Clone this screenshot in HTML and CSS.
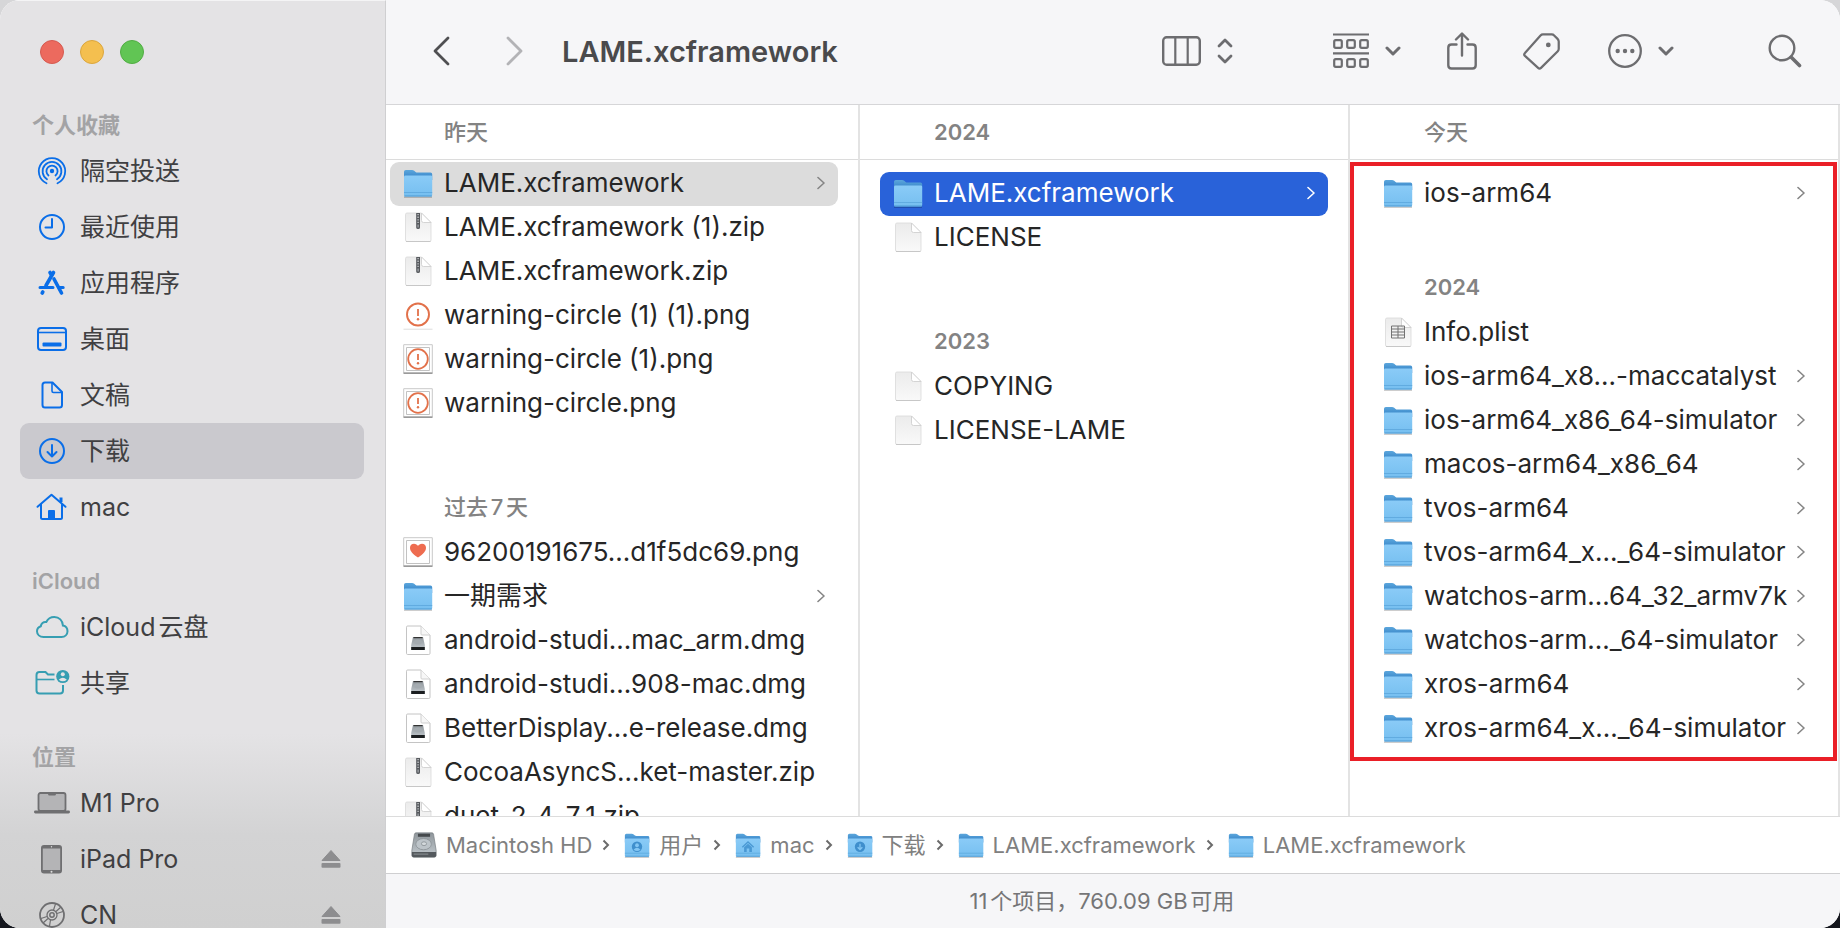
FILE: index.html
```html
<!DOCTYPE html>
<html lang="zh-CN">

<head>
    <meta charset="UTF-8">
    <meta name="viewport" content="width=device-width, initial-scale=1.0">
    <title>LAME.xcframework</title>
    <link rel="stylesheet" href="styles.css">
</head>

<body>
    <!-- icon sprite -->
    <svg class="sprite" width="0" height="0" aria-hidden="true">
        <defs>
            <linearGradient id="folderFront" x1="0" y1="0" x2="0" y2="1">
                <stop offset="0" stop-color="#8acbf7" />
                <stop offset="1" stop-color="#76bff0" />
            </linearGradient>
            <linearGradient id="folderBack" x1="0" y1="0" x2="0" y2="1">
                <stop offset="0" stop-color="#5ba6dc" />
                <stop offset="1" stop-color="#2f7dc4" />
            </linearGradient>
            <linearGradient id="paper" x1="0" y1="0" x2="0" y2="1">
                <stop offset="0" stop-color="#ebebeb" />
                <stop offset="1" stop-color="#f9f9f9" />
            </linearGradient>
            <linearGradient id="metal" x1="0" y1="0" x2="0" y2="1">
                <stop offset="0" stop-color="#8f969b" />
                <stop offset="1" stop-color="#c3cacf" />
            </linearGradient>
        </defs>

        <symbol id="folder" viewBox="0 0 30 30">
            <path d="M1 29.2h28" stroke="#000" stroke-opacity=".22" stroke-width="1.4" />
            <path d="M1 3.8Q1 2 2.8 2H9q1.300 0 2.200.8l1.400 1.200q.6.5 1.800.5H27.500q1.700 0 1.700 1.700V12H1z" fill="url(#folderBack)" />
            <path d="M1 8.800Q1 7.500 2.300 7.500H27.900q1.300 0 1.300 1.300V27q0 1.500-1.500 1.500H2.500Q1 28.500 1 27z" fill="url(#folderFront)" />
            <path d="M1 24.500h28.200" stroke="#5aa6dc" stroke-width=".8" />
            <path d="M1.400 28h27.400" stroke="#4e9ad2" stroke-width="1" />
        </symbol>

        <symbol id="page" viewBox="0 0 30 30">
            <path d="M2.500 2.500Q2.500 1 4 1H18.500L28 10.500V28q0 1.500-1.500 1.500H4q-1.500 0-1.500-1.500z" fill="url(#paper)" stroke="#d9d9d9" stroke-width=".8" />
            <path d="M3 29.500h24.500" stroke="#c4c4c4" stroke-width=".9" />
            <path d="M18.500 1V8.500q0 2 2 2H28z" fill="#fff" stroke="#cfcfcf" stroke-width=".9" />
        </symbol>

        <symbol id="zip" viewBox="0 0 30 30">
            <use href="#page" />
            <path d="M13.200 1h3.800v14.500q0 1.500-1.900 1.500t-1.900-1.500z" fill="#55585c" />
            <path d="M15.100 2v9" stroke="#c4c6c9" stroke-width="1.400" stroke-dasharray="1.300 1.300" />
            <path d="M15.100 12.500v3" stroke="#a9acb0" stroke-width="1.200" />
        </symbol>

        <symbol id="plist" viewBox="0 0 30 30">
            <use href="#page" />
            <path d="M8.500 9h13v12h-13zM8.500 12h13M8.500 15h13M8.500 18h13M15 9v12" fill="none" stroke="#737373" stroke-width="1" />
        </symbol>

        <symbol id="dmg" viewBox="0 0 30 30">
            <path d="M3.500 2.200Q3.500 1 4.700 1H18l9 9V28.300q0 1.200-1.200 1.200H4.700q-1.200 0-1.200-1.200z" fill="#fff" stroke="#c4c4c4" stroke-width="1" />
            <path d="M18 1v8q0 1 1 1h8" fill="#f7f7f7" stroke="#cfcfcf" stroke-width="1" />
            <path d="M10 12h10l1.800 8v5H8.200v-5z" fill="url(#metal)" />
            <path d="M10.500 12h9v1.200h-9z" fill="#333" />
            <ellipse cx="15" cy="17" rx="4" ry="2.500" fill="#a4abb0" />
            <path d="M8.200 22h13.600v3H8.200z" fill="#1b1e20" />
        </symbol>

        <symbol id="warning" viewBox="0 0 30 30">
            <path d="M.5 29.200h29" stroke="#ddd" stroke-width="1" />
            <circle cx="15" cy="14.500" r="11" fill="#fff" stroke="#e2714a" stroke-width="1.900" />
            <path d="M15 9v7" stroke="#e2714a" stroke-width="1.800" />
            <circle cx="15" cy="19.300" r="1.200" fill="#e2714a" />
        </symbol>

        <symbol id="photo" viewBox="0 0 30 30">
            <path d="M.7 .7h28.600v28.200H.7z" fill="#fff" stroke="#c9c9c9" stroke-width="1" />
            <path d="M.5 29.200h29" stroke="#8c8c8c" stroke-width="1.300" />
            <path d="M3.500 3.500h23v23h-23z" fill="#fff" stroke="#c2c2c2" stroke-width="1" />
        </symbol>

        <symbol id="warningPhoto" viewBox="0 0 30 30">
            <use href="#photo" />
            <circle cx="15" cy="15" r="9.800" fill="none" stroke="#e2714a" stroke-width="1.800" />
            <path d="M15 10v6" stroke="#e2714a" stroke-width="1.800" />
            <circle cx="15" cy="19.300" r="1.200" fill="#e2714a" />
        </symbol>

        <symbol id="heartPhoto" viewBox="0 0 30 30">
            <use href="#photo" />
            <path d="M15 20.500C9.500 17 7 14 7 10.800 7 8.400 8.800 6.800 11 6.800c1.800 0 3.200.9 4 2.300.8-1.400 2.200-2.300 4-2.300 2.200 0 4 1.600 4 4 0 3.200-2.500 6.200-8 9.700z" fill="#ee6c50" />
        </symbol>

        <symbol id="disk" viewBox="0 0 30 30">
            <path d="M4 2.500Q4.300 1 5.800 1h18.400q1.500 0 1.800 1.500L29 21v6q0 2-2 2H3q-2 0-2-2v-6z" fill="url(#metal)" stroke="#777d81" stroke-width=".8" />
            <path d="M8 2h14v3.500H8z" fill="#45494c" />
            <ellipse cx="14.500" cy="14" rx="9" ry="6.500" fill="#bdc4c9" stroke="#8d9499" />
            <ellipse cx="15" cy="13.500" rx="3" ry="2.200" fill="#d4d9dc" stroke="#8d9499" />
            <path d="M1 23h28v4q0 2-2 2H3q-2 0-2-2z" fill="#54595d" />
            <path d="M3 25.500h17" stroke="#949a9f" stroke-width="1" />
        </symbol>

        <symbol id="folderUser" viewBox="0 0 30 30">
            <use href="#folder" />
            <circle cx="15" cy="17" r="6" fill="#3f8fcd" />
            <circle cx="15" cy="15.300" r="2.200" fill="#83c6f3" />
            <path d="M11 20.500q4-4.500 8 0-4 3-8 0z" fill="#83c6f3" />
        </symbol>

        <symbol id="folderHome" viewBox="0 0 30 30">
            <use href="#folder" />
            <path d="M8.500 17.500L15 11.500l6.500 6" fill="none" stroke="#4a99d4" stroke-width="1.600" />
            <path d="M10.500 17.500L15 13.500l4.500 4V23h-3v-4h-3v4h-3z" fill="#4a99d4" />
        </symbol>

        <symbol id="folderDown" viewBox="0 0 30 30">
            <use href="#folder" />
            <circle cx="15" cy="17" r="6" fill="#3f8fcd" />
            <path d="M15 13.500v6M12.300 17.500l2.700 2.700 2.700-2.700" fill="none" stroke="#83c6f3" stroke-width="1.500" />
        </symbol>

        <symbol id="chevron" viewBox="0 0 8 14">
            <path d="M1 1.500L7 7l-6 5.500" fill="none" stroke="currentColor" stroke-width="1.600" stroke-linecap="round" stroke-linejoin="round" />
        </symbol>

        <symbol id="caret" viewBox="0 0 16 10">
            <path d="M2 2l6 6 6-6" fill="none" stroke="currentColor" stroke-width="3" stroke-linecap="round" stroke-linejoin="round" />
        </symbol>

        <symbol id="eject" viewBox="0 0 20 20">
            <path d="M10 1.500L19 11.500H1z" stroke="currentColor" stroke-linejoin="round" fill="currentColor" />
            <rect x="0.500" y="14" width="19" height="4.800" rx="1" fill="currentColor" />
        </symbol>
    </svg>

    <div class="window">
        <nav class="sidebar">
            <div class="traffic-lights">
                <button class="light red" aria-label="关闭"></button>
                <button class="light yellow" aria-label="最小化"></button>
                <button class="light green" aria-label="缩放"></button>
            </div>

            <h2 class="sidebar-title">个人收藏</h2>
            <ul class="sidebar-list">
                <li class="sidebar-item"><a href="#">
                    <svg class="side-icon blue" viewBox="0 0 36 36">
                        <g fill="none" stroke="currentColor" stroke-width="1.800" stroke-linecap="round">
                            <path d="M12.500 30.300A13.200 13.200 0 1 1 23.500 30.300" />
                            <path d="M13 26.200A9.400 9.400 0 1 1 23 26.200" />
                            <path d="M14.500 22.500A5.600 5.600 0 1 1 21.500 22.500" />
                        </g>
                        <circle cx="18" cy="18" r="2.200" fill="currentColor" />
                    </svg>
                    <span>隔空投送</span></a></li>
                <li class="sidebar-item"><a href="#">
                    <svg class="side-icon blue" viewBox="0 0 36 36">
                        <g fill="none" stroke="currentColor" stroke-width="2" stroke-linecap="round" stroke-linejoin="round">
                            <circle cx="18" cy="18" r="12" />
                            <path d="M18 10v8.500h-6.500" />
                        </g>
                    </svg>
                    <span>最近使用</span></a></li>
                <li class="sidebar-item"><a href="#">
                    <svg class="side-icon blue" viewBox="0 0 36 36">
                        <g fill="none" stroke="currentColor" stroke-width="3.600" stroke-linecap="round">
                            <path d="M19.500 7.500L12 20.500" />
                            <path d="M16 7.500l1.500 2.500" />
                            <path d="M20 14l7.500 14" />
                            <path d="M6 22.500h13M25.500 22.500h3.700" stroke-width="3" />
                            <path d="M8.800 27l-.6 1" />
                        </g>
                    </svg>
                    <span>应用程序</span></a></li>
                <li class="sidebar-item"><a href="#">
                    <svg class="side-icon blue" viewBox="0 0 36 36">
                        <rect x="4" y="7" width="28" height="22" rx="3" fill="none" stroke="currentColor" stroke-width="2" />
                        <path d="M4 11.500h28" stroke="currentColor" stroke-width="1.600" />
                        <rect x="8.500" y="21.500" width="19" height="4" rx="1" fill="currentColor" />
                    </svg>
                    <span>桌面</span></a></li>
                <li class="sidebar-item"><a href="#">
                    <svg class="side-icon blue" viewBox="0 0 36 36">
                        <g fill="none" stroke="currentColor" stroke-width="2" stroke-linejoin="round">
                            <path d="M11 5.500h7.500l9.500 9.500V28q0 2.500-2.500 2.500H11q-2.500 0-2.500-2.500V8q0-2.500 2.500-2.500z" />
                            <path d="M18 5.800V14q0 1.500 1.500 1.500H28" stroke-width="1.600" />
                        </g>
                    </svg>
                    <span>文稿</span></a></li>
                <li class="sidebar-item selected"><a href="#" aria-current="page">
                    <svg class="side-icon blue" viewBox="0 0 36 36">
                        <g fill="none" stroke="currentColor" stroke-width="2" stroke-linecap="round" stroke-linejoin="round">
                            <circle cx="18" cy="18" r="12" />
                            <path d="M18 12v11.500M13.500 19l4.500 4.500 4.500-4.500" />
                        </g>
                    </svg>
                    <span>下载</span></a></li>
                <li class="sidebar-item"><a href="#">
                    <svg class="side-icon blue" viewBox="0 0 36 36">
                        <g fill="none" stroke="currentColor" stroke-width="2" stroke-linecap="round" stroke-linejoin="round">
                            <path d="M3.500 17.800L17.500 5.800l14 12" />
                            <path d="M7 15.500v13.000q0 1.500 1.500 1.500h18q1.500 0 1.500-1.500V15.500" />
                            <path d="M27 13V8.500" stroke-width="3" stroke-linecap="butt" />
                        </g>
                        <path d="M14 30.500v-8.500q0-1 1-1h5q1 0 1 1v8.500z" fill="currentColor" />
                    </svg>
                    <span>mac</span></a></li>
            </ul>

            <h2 class="sidebar-title">iCloud</h2>
            <ul class="sidebar-list">
                <li class="sidebar-item"><a href="#">
                    <svg class="side-icon teal" viewBox="0 0 36 36">
                        <path d="M9.500 28h18c3.500 0 6-2.400 6-5.700 0-3-2-5.200-4.600-5.700C28.800 11.500 25 8 20.300 8c-3.700 0-6.600 2-8 5-3-.5-5.300 1.500-5.500 4.300C4.300 18.200 3 20.200 3 22.300 3 25.500 5.700 28 9.500 28z" fill="none" stroke="currentColor" stroke-width="2" />
                    </svg>
                    <span>iCloud云盘</span></a></li>
                <li class="sidebar-item"><a href="#">
                    <svg class="side-icon teal" viewBox="0 0 36 36">
                        <g fill="none" stroke="currentColor" stroke-width="2">
                            <path d="M20.500 9.500H14L11.500 7H5.500Q2.500 7 2.500 10v15.500q0 3 3 3H26q3 0 3-3V20" />
                            <path d="M2.500 14.500h18" stroke-width="1.600" />
                        </g>
                        <circle cx="28.800" cy="11.500" r="6.600" fill="currentColor" />
                        <circle cx="28.800" cy="9.300" r="2" fill="#e4e3e5" />
                        <path d="M24.800 14.800q4-4 8 0-4 3-8 0z" fill="#e4e3e5" />
                    </svg>
                    <span>共享</span></a></li>
            </ul>

            <h2 class="sidebar-title">位置</h2>
            <ul class="sidebar-list">
                <li class="sidebar-item"><a href="#">
                    <svg class="side-icon gray" viewBox="0 0 36 36">
                        <rect x="4.500" y="8" width="27" height="18" rx="2" fill="#b4b4b6" stroke="currentColor" stroke-width="1.800" />
                        <path d="M14 8h8v1q0 1.500-1.500 1.500h-5Q14 10.500 14 9z" fill="currentColor" />
                        <rect x="0" y="25.500" width="36" height="3" rx="1.400" fill="currentColor" />
                    </svg>
                    <span>M1 Pro</span></a></li>
                <li class="sidebar-item"><a href="#">
                    <svg class="side-icon gray" viewBox="0 0 36 36">
                        <rect x="7" y="4" width="21" height="28.500" rx="3" fill="currentColor" />
                        <rect x="8.800" y="7.500" width="17.400" height="21.500" fill="#b4b4b6" />
                        <circle cx="17.500" cy="30.700" r="1" fill="#ddd" />
                        <circle cx="17.500" cy="5.800" r=".7" fill="#ddd" />
                    </svg>
                    <span>iPad Pro</span></a>
                    <button class="eject" aria-label="推出 iPad Pro"><svg viewBox="0 0 20 20"><use href="#eject" /></svg></button></li>
                <li class="sidebar-item"><a href="#">
                    <svg class="side-icon gray" viewBox="0 0 36 36">
                        <g fill="none" stroke="currentColor" stroke-width="1.800">
                            <circle cx="18" cy="18" r="12" />
                            <circle cx="18" cy="18" r="5" stroke-width="1.300" />
                            <circle cx="18" cy="18" r="2.200" stroke-width="1.500" />
                            <path d="M22 14.500l5-4.500M23 16.500l6-2M14 21.500l-5 4.500M13 19.500l-6 2M19.500 13l2-6M16.500 23l-1 6" stroke-width="1.200" />
                        </g>
                    </svg>
                    <span>CN</span></a>
                    <button class="eject" aria-label="推出 CN"><svg viewBox="0 0 20 20"><use href="#eject" /></svg></button></li>
            </ul>
        </nav>

        <main class="content">
            <header class="toolbar">
                <button class="tool" aria-label="后退">
                    <svg width="17" height="30" viewBox="0 0 17 30"><path d="M15 2L2 15l13 13" fill="none" stroke="#4f4f52" stroke-width="2.800" stroke-linecap="round" stroke-linejoin="round" /></svg>
                </button>
                <button class="tool forward" aria-label="前进" disabled>
                    <svg width="17" height="30" viewBox="0 0 17 30"><path d="M2 2l13 13L2 28" fill="none" stroke="#b3b3b6" stroke-width="2.800" stroke-linecap="round" stroke-linejoin="round" /></svg>
                </button>
                <h1 class="title">LAME.xcframework</h1>

                <button class="tool view-switch" aria-label="分栏显示">
                    <svg width="39" height="30" viewBox="0 0 39 30">
                        <rect x="1.200" y="1.200" width="36.600" height="27.600" rx="3.500" fill="none" stroke="currentColor" stroke-width="2.400" />
                        <path d="M13.300 1v28M25.700 1v28" stroke="currentColor" stroke-width="2.200" />
                    </svg>
                    <svg width="16" height="26" viewBox="0 0 16 26">
                        <path d="M2 8l6-6 6 6M2 18l6 6 6-6" fill="none" stroke="currentColor" stroke-width="2.800" stroke-linecap="round" stroke-linejoin="round" />
                    </svg>
                </button>

                <div class="tools">
                    <button class="tool" aria-label="群组">
                        <svg width="36" height="36" viewBox="0 0 36 36" fill="none" stroke="currentColor" stroke-width="2.200">
                            <path d="M0 1.500h36M0 20.300h36" />
                            <rect x="1.200" y="7.200" width="7.600" height="7.600" rx="1.500" />
                            <rect x="14.200" y="7.200" width="7.600" height="7.600" rx="1.500" />
                            <rect x="27.200" y="7.200" width="7.600" height="7.600" rx="1.500" />
                            <rect x="1.200" y="26.200" width="7.600" height="7.600" rx="1.500" />
                            <rect x="14.200" y="26.200" width="7.600" height="7.600" rx="1.500" />
                            <rect x="27.200" y="26.200" width="7.600" height="7.600" rx="1.500" />
                        </svg>
                        <svg width="16" height="10"><use href="#caret" /></svg>
                    </button>
                    <button class="tool" aria-label="共享">
                        <svg width="30" height="38" viewBox="0 0 30 38" fill="none" stroke="currentColor" stroke-width="2.400" stroke-linecap="round" stroke-linejoin="round">
                            <path d="M9.500 12.500H4.500q-3.200 0-3.200 3.200v17.600q0 3.200 3.200 3.200h21q3.200 0 3.200-3.200V15.700q0-3.200-3.200-3.200H20.500" />
                            <path d="M15 23.500V2M9 7.500L15 1.500l6 6" />
                        </svg>
                    </button>
                    <button class="tool" aria-label="标签">
                        <svg width="37" height="37" viewBox="0 0 38 38" fill="none" stroke="currentColor" stroke-width="2.300" stroke-linejoin="round">
                            <path d="M20.500 1.500h9q1.500 0 2.500 1l3.500 3.500q1.200 1.200 1.200 2.800v7.500q0 1.500-1 2.500L18.500 35.800q-1.500 1.500-3 0L2 23.500q-1.500-1.500 0-3L18 2.500q1-1 2.500-1z" />
                            <circle cx="26" cy="12.200" r="1.300" fill="currentColor" />
                        </svg>
                    </button>
                    <button class="tool more" aria-label="更多操作">
                        <svg width="34" height="34" viewBox="0 0 34 34">
                            <circle cx="17" cy="17" r="15.800" fill="none" stroke="currentColor" stroke-width="2.300" />
                            <g fill="currentColor"><circle cx="9.700" cy="17" r="2.200" /><circle cx="17" cy="17" r="2.200" /><circle cx="24.300" cy="17" r="2.200" /></g>
                        </svg>
                        <svg width="16" height="10"><use href="#caret" /></svg>
                    </button>
                </div>

                <button class="tool search" aria-label="搜索">
                    <svg width="34" height="34" viewBox="0 0 34 34" fill="none" stroke="currentColor" stroke-linecap="round">
                        <circle cx="14" cy="14" r="12.300" stroke-width="2.400" />
                        <path d="M23.500 23.500l8 8" stroke-width="3.600" />
                    </svg>
                </button>
            </header>

            <div class="columns">
                <section class="column column-first">
                    <h3 class="column-head day">昨天</h3>
                    <ul class="files">
                        <li><a class="file open" href="#"><svg class="file-icon"><use href="#folder" /></svg><span class="name">LAME.xcframework</span><svg class="chevron"><use href="#chevron" /></svg></a></li>
                        <li><a class="file" href="#"><svg class="file-icon"><use href="#zip" /></svg><span class="name">LAME.xcframework (1).zip</span></a></li>
                        <li><a class="file" href="#"><svg class="file-icon"><use href="#zip" /></svg><span class="name">LAME.xcframework.zip</span></a></li>
                        <li><a class="file" href="#"><svg class="file-icon"><use href="#warning" /></svg><span class="name">warning-circle (1) (1).png</span></a></li>
                        <li><a class="file" href="#"><svg class="file-icon"><use href="#warningPhoto" /></svg><span class="name">warning-circle (1).png</span></a></li>
                        <li><a class="file" href="#"><svg class="file-icon"><use href="#warningPhoto" /></svg><span class="name">warning-circle.png</span></a></li>
                    </ul>
                    <h3 class="group-title day">过去7天</h3>
                    <ul class="files">
                        <li><a class="file" href="#"><svg class="file-icon"><use href="#heartPhoto" /></svg><span class="name">96200191675...d1f5dc69.png</span></a></li>
                        <li><a class="file" href="#"><svg class="file-icon"><use href="#folder" /></svg><span class="name">一期需求</span><svg class="chevron"><use href="#chevron" /></svg></a></li>
                        <li><a class="file" href="#"><svg class="file-icon"><use href="#dmg" /></svg><span class="name">android-studi...mac_arm.dmg</span></a></li>
                        <li><a class="file" href="#"><svg class="file-icon"><use href="#dmg" /></svg><span class="name">android-studi...908-mac.dmg</span></a></li>
                        <li><a class="file" href="#"><svg class="file-icon"><use href="#dmg" /></svg><span class="name">BetterDisplay...e-release.dmg</span></a></li>
                        <li><a class="file" href="#"><svg class="file-icon"><use href="#zip" /></svg><span class="name">CocoaAsyncS...ket-master.zip</span></a></li>
                        <li><a class="file" href="#"><svg class="file-icon"><use href="#zip" /></svg><span class="name">duet_2_4_7_1.zip</span></a></li>
                    </ul>
                </section>

                <section class="column column-middle">
                    <h3 class="column-head">2024</h3>
                    <ul class="files">
                        <li><a class="file active" href="#"><svg class="file-icon"><use href="#folder" /></svg><span class="name">LAME.xcframework</span><svg class="chevron"><use href="#chevron" /></svg></a></li>
                        <li><a class="file" href="#"><svg class="file-icon"><use href="#page" /></svg><span class="name">LICENSE</span></a></li>
                    </ul>
                    <h3 class="group-title">2023</h3>
                    <ul class="files">
                        <li><a class="file" href="#"><svg class="file-icon"><use href="#page" /></svg><span class="name">COPYING</span></a></li>
                        <li><a class="file" href="#"><svg class="file-icon"><use href="#page" /></svg><span class="name">LICENSE-LAME</span></a></li>
                    </ul>
                </section>

                <section class="column column-last">
                    <h3 class="column-head day">今天</h3>
                    <div class="marked">
                        <ul class="files">
                            <li><a class="file" href="#"><svg class="file-icon"><use href="#folder" /></svg><span class="name">ios-arm64</span><svg class="chevron"><use href="#chevron" /></svg></a></li>
                        </ul>
                        <h3 class="group-title">2024</h3>
                        <ul class="files">
                            <li><a class="file" href="#"><svg class="file-icon"><use href="#plist" /></svg><span class="name">Info.plist</span></a></li>
                            <li><a class="file" href="#"><svg class="file-icon"><use href="#folder" /></svg><span class="name">ios-arm64_x8...-maccatalyst</span><svg class="chevron"><use href="#chevron" /></svg></a></li>
                            <li><a class="file" href="#"><svg class="file-icon"><use href="#folder" /></svg><span class="name">ios-arm64_x86_64-simulator</span><svg class="chevron"><use href="#chevron" /></svg></a></li>
                            <li><a class="file" href="#"><svg class="file-icon"><use href="#folder" /></svg><span class="name">macos-arm64_x86_64</span><svg class="chevron"><use href="#chevron" /></svg></a></li>
                            <li><a class="file" href="#"><svg class="file-icon"><use href="#folder" /></svg><span class="name">tvos-arm64</span><svg class="chevron"><use href="#chevron" /></svg></a></li>
                            <li><a class="file" href="#"><svg class="file-icon"><use href="#folder" /></svg><span class="name">tvos-arm64_x..._64-simulator</span><svg class="chevron"><use href="#chevron" /></svg></a></li>
                            <li><a class="file" href="#"><svg class="file-icon"><use href="#folder" /></svg><span class="name">watchos-arm...64_32_armv7k</span><svg class="chevron"><use href="#chevron" /></svg></a></li>
                            <li><a class="file" href="#"><svg class="file-icon"><use href="#folder" /></svg><span class="name">watchos-arm..._64-simulator</span><svg class="chevron"><use href="#chevron" /></svg></a></li>
                            <li><a class="file" href="#"><svg class="file-icon"><use href="#folder" /></svg><span class="name">xros-arm64</span><svg class="chevron"><use href="#chevron" /></svg></a></li>
                            <li><a class="file" href="#"><svg class="file-icon"><use href="#folder" /></svg><span class="name">xros-arm64_x..._64-simulator</span><svg class="chevron"><use href="#chevron" /></svg></a></li>
                        </ul>
                    </div>
                </section>
            </div>

            <nav class="path-bar" aria-label="路径">
                <a class="crumb" href="#"><svg class="path-icon"><use href="#disk" /></svg>Macintosh HD</a>
                <svg class="path-sep" viewBox="0 0 8 14"><path d="M1.500 2.500L6 7l-4.500 4.500" /></svg>
                <a class="crumb" href="#"><svg class="path-icon"><use href="#folderUser" /></svg>用户</a>
                <svg class="path-sep" viewBox="0 0 8 14"><path d="M1.500 2.500L6 7l-4.500 4.500" /></svg>
                <a class="crumb" href="#"><svg class="path-icon"><use href="#folderHome" /></svg>mac</a>
                <svg class="path-sep" viewBox="0 0 8 14"><path d="M1.500 2.500L6 7l-4.500 4.500" /></svg>
                <a class="crumb" href="#"><svg class="path-icon"><use href="#folderDown" /></svg>下载</a>
                <svg class="path-sep" viewBox="0 0 8 14"><path d="M1.500 2.500L6 7l-4.500 4.500" /></svg>
                <a class="crumb" href="#"><svg class="path-icon"><use href="#folder" /></svg>LAME.xcframework</a>
                <svg class="path-sep" viewBox="0 0 8 14"><path d="M1.500 2.500L6 7l-4.500 4.500" /></svg>
                <a class="crumb" href="#"><svg class="path-icon"><use href="#folder" /></svg>LAME.xcframework</a>
            </nav>

            <footer class="status-bar">11个项目，760.09 GB可用</footer>
        </main>
    </div>
</body>

</html>
```

FILE: styles.css
```css
* {
    box-sizing: border-box;
}

body {
    margin: 0;
    background: linear-gradient(#d6d6d8 50%, #14161d 50%);
    font-family: Inter, "Noto Sans CJK SC", sans-serif;
    font-size: 26px;
    color: #262626;
    text-autospace: normal;
}

ul {
    list-style: none;
    margin: 0;
    padding: 0;
}

h1,
h2,
h3 {
    margin: 0;
}

a {
    color: inherit;
    text-decoration: none;
}

button {
    padding: 0;
    border: none;
    background: none;
    color: inherit;
}

svg {
    display: block;
    flex: none;
}

.sprite {
    position: absolute;
}

.window {
    display: grid;
    grid-template-columns: 386px 1fr;
    height: 100vh;
    border-radius: 20px;
    overflow: hidden;
    background: #fff;
}

/* Sidebar */
.sidebar {
    overflow: hidden;
    padding: 0 20px;
    border-top: 1px solid #f4f4f5;
    border-right: 1px solid #cfcfd1;
    background: linear-gradient(#e4e3e5 79%, #d3d3d4 90%, #d0d0d0);
    font-size: 25px;
    color: #404042;
}

.traffic-lights {
    display: flex;
    gap: 16px;
    height: 78px;
    padding: 39px 20px 0;
}

.light {
    width: 24px;
    height: 24px;
    border-radius: 50%;
}

.red {
    background: #ec6a5e;
    border: 1px solid #d55a50;
}

.yellow {
    background: #f4bf4f;
    border: 1px solid #dba63d;
}

.green {
    background: #61c554;
    border: 1px solid #51ad43;
}

.sidebar-title {
    height: 64px;
    padding: 28px 12px 0;
    font-size: 22px;
    line-height: 36px;
    font-weight: 600;
    color: #a3a3a5;
}

.sidebar-item {
    display: flex;
    align-items: center;
    height: 56px;
    padding: 0 24px 0 14px;
    border-radius: 9px;
}

.sidebar-item.selected {
    margin-right: 1px;
    background: #cac9ce;
}

.sidebar-item a {
    display: flex;
    align-items: center;
    gap: 10px;
    flex: 1;
    line-height: 34px;
}

.side-icon {
    width: 36px;
    height: 36px;
}

.blue {
    color: #0a6ee8;
}

.teal {
    color: #369eb2;
}

.gray {
    color: #6f6f71;
}

.eject svg {
    width: 20px;
    height: 20px;
    color: #8d8d8f;
}

/* Toolbar */
.content {
    display: grid;
    grid-template-rows: 105px 1fr 58px 54px;
    min-width: 0;
    min-height: 0;
}

.toolbar {
    display: flex;
    align-items: center;
    padding: 0 38px 2px 47px;
    border-bottom: 1px solid #d6d6d8;
    background: #f6f6f8;
    color: #6d6d70;
}

.tool {
    display: flex;
    align-items: center;
    gap: 16px;
}

.forward {
    margin-left: 56px;
}

.title {
    flex: 1;
    margin-left: 39px;
    font-size: 29px;
    font-weight: 600;
    color: #4a4a4c;
}

.tools {
    display: flex;
    align-items: center;
    gap: 46px;
    margin-left: 100px;
}

.more {
    margin-left: 2px;
}

.search {
    margin-left: 94px;
}

/* Columns */
.columns {
    display: grid;
    grid-template-columns: 474fr 490fr 490fr;
    min-height: 0;
    overflow: hidden;
}

.column {
    min-width: 0;
    border-right: 2px solid #e3e3e3;
}

.column-head {
    height: 55px;
    padding-left: 74px;
    border-bottom: 1px solid #dcdcdc;
}

.column-first .column-head {
    padding-left: 58px;
}

.column-head,
.group-title {
    font-size: 22px;
    line-height: 54px;
    font-weight: 600;
    color: #838383;
}

.group-title {
    margin-top: 57px;
    padding-left: 74px;
    line-height: 48px;
}

.column-head.day,
.group-title.day {
    font-weight: 500;
}

.files {
    margin: 0 20px;
}

.column-first .column-head + .files {
    margin-top: 2px;
}

.column-first .files {
    margin-left: 4px;
}

.column-first .group-title {
    padding-left: 58px;
}

.column-middle .column-head + .files {
    margin-top: 12px;
}

.file {
    display: flex;
    align-items: center;
    height: 44px;
    padding: 0 13px 2px;
    border-radius: 9px;
}

.file.open {
    background: #dcdcdc;
}

.file.active {
    background: #2962d9;
    color: #fff;
}

.file-icon {
    width: 30px;
    height: 30px;
}

.name {
    flex: 1;
    margin-left: 11px;
    line-height: 32px;
    white-space: nowrap;
}

.chevron {
    width: 8px;
    height: 14px;
    color: #858585;
}

.active .chevron {
    color: #fff;
}

.marked {
    margin: 2px 1px 0 0;
    padding: 6px 0;
    border: 4px solid #ea1f27;
}

.marked .files {
    margin: 0 15px 0 16px;
}

.marked .group-title {
    margin-top: 47px;
    padding-left: 70px;
}

/* Bottom bars */
.path-bar {
    display: flex;
    align-items: center;
    padding-left: 25px;
    border-top: 1px solid #dcdcdc;
    border-bottom: 1px solid #cfcfd1;
    font-size: 22px;
    line-height: 30px;
    color: #808080;
}

.crumb {
    display: flex;
    align-items: center;
    gap: 9px;
    white-space: nowrap;
}

.path-icon {
    width: 26px;
    height: 26px;
}

.path-sep {
    width: 8px;
    height: 14px;
    margin: 0 14px 0 10px;
    fill: none;
    stroke: #6b6b6b;
    stroke-width: 2;
}

.status-bar {
    padding-right: 22px;
    background: #f6f6f8;
    font-size: 22px;
    line-height: 54px;
    text-align: center;
    color: #757577;
}
```
